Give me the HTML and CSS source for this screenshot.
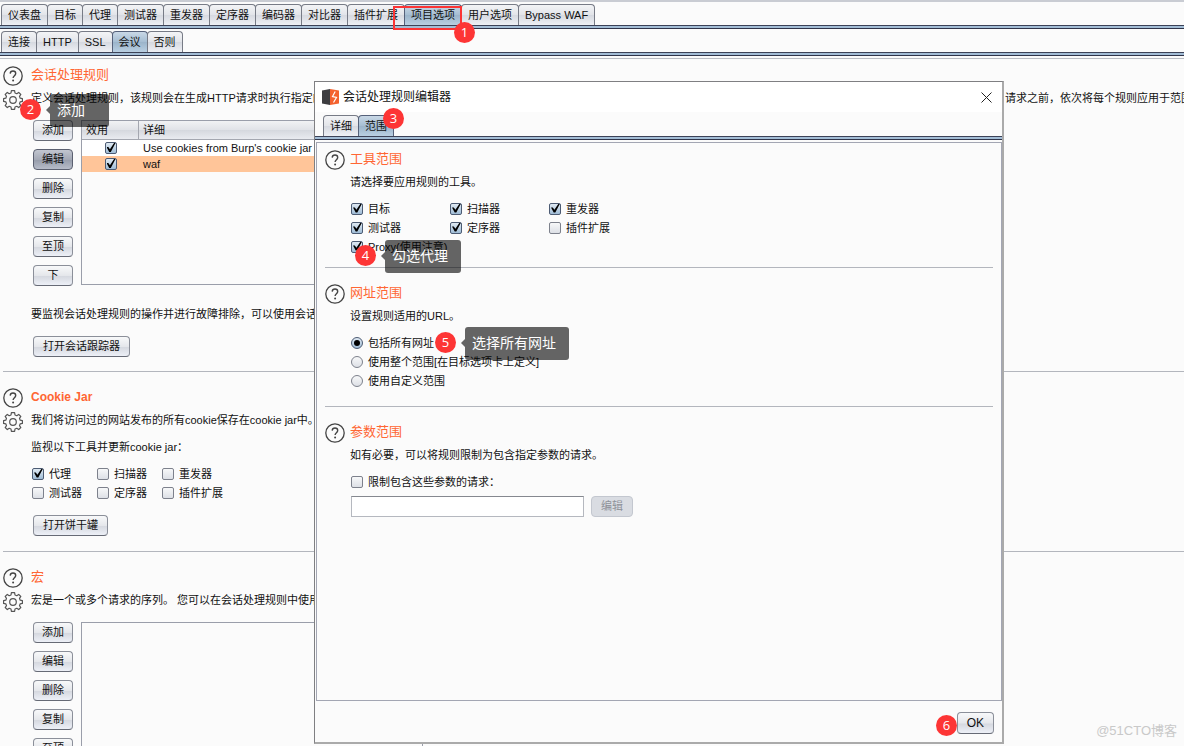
FILE: index.html
```html
<!DOCTYPE html>
<html lang="zh-CN">
<head>
<meta charset="utf-8">
<title>会话处理规则编辑器</title>
<link rel="stylesheet" href="styles.css">
</head>
<body>
<svg class="defs" aria-hidden="true">
  <symbol id="help" viewBox="0 0 20 20">
    <circle cx="10" cy="10" r="9.2" fill="none" stroke="#444" stroke-width="1.3"/>
    <path d="M7.2 7.6C7.3 5.9 8.4 5 10 5s2.7 1 2.7 2.4c0 2.3-2.6 2.3-2.6 4.7" fill="none" stroke="#444" stroke-width="1.4"/>
    <circle cx="10.1" cy="14.6" r="1" fill="#444"/>
  </symbol>
  <symbol id="gear" viewBox="0 0 20 20">
    <path d="M8.400 .700h3.200l.400 2.300 1.800.700 1.900-1.300 2.100 2.100-1.300 1.900.700 1.800 2.200.400v2.800l-2.200.400-.700 1.800 1.300 1.900-2.100 2.100-1.900-1.300-1.800.700-.400 2.300H8.400L8 17l-1.800-.700-1.900 1.300-2.100-2.100 1.300-1.900-.700-1.800-2.200-.400V8.600l2.200-.400.700-1.800-1.300-1.900 2.100-2.100 1.900 1.300L8 3z" fill="none" stroke="#555" stroke-width="1.2" stroke-linejoin="round"/>
    <circle cx="10" cy="10" r="3.300" fill="none" stroke="#555" stroke-width="1.2"/>
  </symbol>
</svg>

<main class="app">
  <nav class="tabs">
    <button class="tab">仪表盘</button><button class="tab">目标</button><button class="tab">代理</button><button class="tab">测试器</button><button class="tab">重发器</button><button class="tab">定序器</button><button class="tab">编码器</button><button class="tab">对比器</button><button class="tab">插件扩展</button><button class="tab active">项目选项</button><button class="tab">用户选项</button><button class="tab">Bypass WAF</button>
  </nav>
  <nav class="tabs">
    <button class="tab">连接</button><button class="tab">HTTP</button><button class="tab">SSL</button><button class="tab active">会议</button><button class="tab">否则</button>
  </nav>

  <div class="options">
    <section class="section">
      <div class="icons"><svg class="icon"><use href="#help"/></svg><svg class="icon"><use href="#gear"/></svg></div>
      <div class="content">
        <h2>会话处理规则</h2>
        <p class="desc split"><span>定义会话处理规则，该规则会在生成HTTP请求时执行指定的操作</span><span class="tail">请求之前，依次将每个规则应用于范围</span></p>
        <div class="list">
          <div class="actions">
            <button class="btn">添加</button><button class="btn pressed">编辑</button><button class="btn">删除</button><button class="btn">复制</button><button class="btn">至顶</button><button class="btn">下</button>
          </div>
          <div class="frame">
            <table class="rules">
              <thead><tr><th class="enabled">效用</th><th>详细</th></tr></thead>
              <tbody>
                <tr><td class="enabled"><input type="checkbox" class="check" aria-label="Use cookies from Burp's cookie jar" checked></td><td>Use cookies from Burp's cookie jar</td></tr>
                <tr class="selected"><td class="enabled"><input type="checkbox" class="check" aria-label="waf" checked></td><td>waf</td></tr>
              </tbody>
            </table>
          </div>
        </div>
        <p class="note">要监视会话处理规则的操作并进行故障排除，可以使用会话跟踪器</p>
        <button class="btn wide tracer">打开会话跟踪器</button>
      </div>
    </section>

    <section class="section">
      <div class="icons"><svg class="icon"><use href="#help"/></svg><svg class="icon"><use href="#gear"/></svg></div>
      <div class="content">
        <h2 class="strong">Cookie Jar</h2>
        <p class="desc">我们将访问过的网站发布的所有cookie保存在cookie jar中。会话</p>
        <p class="monitor">监视以下工具并更新cookie jar：</p>
        <div class="choices jar">
          <label><input type="checkbox" class="check" checked>代理</label><label><input type="checkbox" class="check">扫描器</label><label><input type="checkbox" class="check">重发器</label>
          <label><input type="checkbox" class="check">测试器</label><label><input type="checkbox" class="check">定序器</label><label><input type="checkbox" class="check">插件扩展</label>
        </div>
        <button class="btn wide open-jar">打开饼干罐</button>
      </div>
    </section>

    <section class="section">
      <div class="icons"><svg class="icon"><use href="#help"/></svg><svg class="icon"><use href="#gear"/></svg></div>
      <div class="content">
        <h2>宏</h2>
        <p class="desc">宏是一个或多个请求的序列。 您可以在会话处理规则中使用宏</p>
        <div class="list">
          <div class="actions">
            <button class="btn">添加</button><button class="btn">编辑</button><button class="btn">删除</button><button class="btn">复制</button><button class="btn">至顶</button>
          </div>
          <div class="frame"></div>
        </div>
      </div>
    </section>
  </div>

  <div class="watermark">@51CTO博客</div>

  <div class="dialog" role="dialog" aria-labelledby="dialog-title">
    <header class="titlebar">
      <svg class="logo" viewBox="0 0 17 16"><path d="M0 1.500 8 0v16l-8-1.500z" fill="#3d3d40"/><path d="M8 0l9 1.500v13L8 16z" fill="#f4622f"/><path d="M13.200 2.500 10.500 7.500l4 1-3 5" fill="none" stroke="#fff" stroke-width="1.200"/></svg>
      <h1 id="dialog-title">会话处理规则编辑器</h1>
      <button class="close" aria-label="关闭"><svg viewBox="0 0 11 11"><path d="M.5.5l10 10M10.500.5l-10 10" stroke="#222" fill="none"/></svg></button>
    </header>
    <nav class="tabs dialog-tabs">
      <button class="tab">详细</button><button class="tab active">范围</button>
    </nav>
    <div class="panel">
      <section class="section">
        <svg class="icon"><use href="#help"/></svg>
        <div class="content">
          <h2>工具范围</h2>
          <p class="desc">请选择要应用规则的工具。</p>
          <div class="choices tools">
            <label><input type="checkbox" class="check" checked>目标</label><label><input type="checkbox" class="check" checked>扫描器</label><label><input type="checkbox" class="check" checked>重发器</label>
            <label><input type="checkbox" class="check" checked>测试器</label><label><input type="checkbox" class="check" checked>定序器</label><label><input type="checkbox" class="check">插件扩展</label>
            <label><input type="checkbox" class="check" checked>Proxy(使用注意)</label>
          </div>
        </div>
      </section>
      <section class="section">
        <svg class="icon"><use href="#help"/></svg>
        <div class="content">
          <h2>网址范围</h2>
          <p class="desc">设置规则适用的URL。</p>
          <div class="choices">
            <label><input type="radio" name="scope" class="radio" checked>包括所有网址</label>
            <label><input type="radio" name="scope" class="radio">使用整个范围[在目标选项卡上定义]</label>
            <label><input type="radio" name="scope" class="radio">使用自定义范围</label>
          </div>
        </div>
      </section>
      <section class="section">
        <svg class="icon"><use href="#help"/></svg>
        <div class="content">
          <h2>参数范围</h2>
          <p class="desc">如有必要，可以将规则限制为包含指定参数的请求。</p>
          <div class="choices"><label><input type="checkbox" class="check">限制包含这些参数的请求：</label></div>
          <div class="params"><input type="text" class="field" aria-label="参数"><button class="btn" disabled>编辑</button></div>
        </div>
      </section>
    </div>
    <footer class="footer"><button class="btn ok">OK</button></footer>
  </div>

  <div class="highlight"></div>
  <span class="badge b1">1</span>
  <span class="badge b2">2</span><span class="tip t2">添加</span>
  <span class="badge b3">3</span>
  <span class="badge b4">4</span><span class="tip t4">勾选代理</span>
  <span class="badge b5">5</span><span class="tip t5">选择所有网址</span>
  <span class="badge b6">6</span>
</main>
</body>
</html>
```
FILE: styles.css
```css
* { box-sizing: border-box; }
body {
  margin: 0;
  background: #fbfbfb;
  color: #111;
  font: 11px/16px "Liberation Sans", "Noto Sans CJK SC", sans-serif;
}
h1, h2, p { margin: 0; font-weight: normal; }
button, input { font: inherit; color: inherit; margin: 0; }
.defs { display: none; }
.app { position: relative; height: 100vh; overflow: hidden; border-top: 2px solid #c9ccd3; }

/* Tabs */
.tabs {
  display: flex;
  padding: 2px 0 4px 1px;
  white-space: nowrap;
  background: linear-gradient(#3c4257 0 1px, #a3bdd6 1px 3px, #30354a 3px 4px) bottom / 100% 4px no-repeat;
}
.tab {
  height: 21px;
  padding: 0 6px;
  margin-right: -1px;
  border: 1px solid #777b86;
  border-bottom: 0;
  border-radius: 4px 4px 0 0;
  background: linear-gradient(#f3f4f6, #e2e4e9 50%, #d6d9e0 51%, #eef0f5);
  line-height: 20px;
}
.tab.active { background: linear-gradient(#c9d8e6, #a5bdd2 50%, #9bb4ca 51%, #b9cfe2); border-color: #55617a; }

/* Option sections */
.options { border-top: 1px solid #b9bcc3; margin-top: 2px; padding-left: 3px; }
.section { display: grid; grid-template-columns: 20px minmax(0, 1fr); column-gap: 8px; padding: 16px 0 15px; border-bottom: 1px solid #b3b6bd; }
.options .section:first-child { padding: 7px 0 14px; }
.section:last-child { border-bottom: 0; }
.icons { display: flex; flex-direction: column; gap: 4px; }
.icon { display: block; width: 20px; height: 20px; }
h2 { color: #ff6633; font-size: 13px; line-height: 18px; }
h2.strong { font-size: 12px; font-weight: bold; }
.desc { margin-top: 6px; white-space: nowrap; overflow: hidden; }
.split { display: flex; justify-content: space-between; }
.tail { margin-right: -8px; }
.list { display: flex; gap: 8px; margin-top: 14px; }
.actions { display: flex; flex-direction: column; gap: 8px; width: 42px; padding-left: 2px; }
.btn {
  height: 21px;
  padding: 0 9px;
  border: 1px solid #8b8f99;
  border-bottom-color: #666a75;
  border-radius: 4px;
  background: linear-gradient(#f8f9fa, #e5e7eb 50%, #d6d9e0 55%, #edf0f7);
  line-height: 19px;
  white-space: nowrap;
}
.actions .btn { padding: 0; }
.btn.pressed { background: linear-gradient(#c2c6d0, #a4a9b6 50%, #989eac 55%, #b7bcc9); border-color: #5b6070; }
.btn:disabled { background: #d9dce2; border-color: #c3c7cf; color: #8e9199; }
.wide { display: block; margin-left: 2px; }
.frame { width: 342px; border: 1px solid #9a9eaa; height: 165px; }
.rules { width: 100%; border-collapse: separate; border-spacing: 0; }
.rules th { height: 19px; padding: 0 4px; text-align: left; font-weight: normal; background: linear-gradient(#f1f2f4, #e0e2e7 50%, #d5d8de 51%, #e9ebf0); border-bottom: 1px solid #a4a7b0; }
.rules th.enabled { width: 57px; border-right: 1px solid #a4a7b0; }
.rules td { height: 16px; padding: 0 4px; line-height: 16px; }
.rules tbody tr { background: #fff; }
.rules tbody tr.selected { background: #ffc599; }
td.enabled .check { display: block; margin: 0 auto; }
.note { margin-top: 20px; white-space: nowrap; }
.tracer { margin-top: 14px; }
.monitor { margin-top: 11px; }
.open-jar { margin-top: 13px; }

/* Choices */
.choices { display: grid; margin-top: 9px; }
.jar { grid-template-columns: repeat(3, 65px); }
.tools { grid-template-columns: repeat(3, 99px); }
.choices label { display: flex; align-items: center; gap: 5px; height: 19px; padding-left: 1px; white-space: nowrap; }
.check, .radio {
  appearance: none;
  flex: none;
  position: relative;
  width: 12px;
  height: 12px;
  border: 1px solid #7d818c;
  border-radius: 2px;
  background: linear-gradient(#f7f8f9, #dde0e6);
}
.radio { border-radius: 50%; }
.check:checked, .radio:checked { background: linear-gradient(#dfe9f2, #9fbcd6); border-color: #4c5b73; }
.check:checked::after {
  content: "";
  position: absolute;
  left: 1px;
  top: 0;
  width: 9px;
  height: 9px;
  background: #000;
  clip-path: polygon(0 45%, 20% 45%, 38% 70%, 84% 0, 100% 0, 48% 100%, 30% 100%);
}
.radio:checked::after { content: ""; position: absolute; inset: 2px; border-radius: 50%; background: #000; }

/* Dialog */
.dialog {
  position: absolute;
  left: 314px;
  right: 180px;
  top: 79px;
  bottom: 2px;
  display: flex;
  flex-direction: column;
  background: #fbfbfb;
  border: 1px solid #7f7f82;
  border-right: 2px solid #aaa;
  border-bottom: 2px solid #aaa;
}
.titlebar { display: flex; align-items: center; gap: 4px; height: 30px; padding: 0 10px 0 7px; background: #fff; }
.logo { width: 17px; height: 16px; }
h1 { font-size: 12px; }
.close { display: flex; margin-left: auto; padding: 0; border: 0; background: none; }
.close svg { width: 11px; height: 11px; }
.dialog-tabs { padding: 3px 0 4px 8px; }
.panel { flex: 1; margin: 2px 0 0 1px; padding: 0 8px; border: 1px solid #a3a6b3; }
.panel .section { column-gap: 5px; padding-bottom: 16px; }
.panel .section:first-child { padding: 7px 0 11px; }
.params { display: flex; gap: 7px; margin-top: 5px; padding-left: 1px; }
.field { width: 233px; height: 21px; padding: 0 4px; border: 1px solid #b5b8bf; border-top-color: #85888f; background: #fff; }
.footer { display: flex; justify-content: flex-end; padding: 11px 8px 8px; }
.ok { height: 22px; font-size: 12px; }

/* Numbered guide marks over the interface */
.highlight { position: absolute; left: 393px; top: 4px; width: 69px; height: 24px; border: 2px solid #fb3434; }
.badge { position: absolute; width: 21px; height: 21px; border-radius: 50%; background: #fd3535; color: #fff; font: 13px/21px "Open Sans", sans-serif; text-align: center; }
.b1 { left: 454px; top: 20px; }
.b2 { left: 20px; top: 97px; }
.b3 { left: 383px; top: 106px; }
.b4 { left: 355px; top: 243px; }
.b5 { left: 435px; top: 330px; }
.b6 { right: 227px; bottom: 10px; }
.tip { position: absolute; height: 33px; padding: 0 13px 0 7px; border-radius: 3px; background: rgba(0, 0, 0, .6); color: #fff; font-size: 14px; line-height: 33px; white-space: nowrap; }
.tip::before { content: ""; position: absolute; left: -4px; top: 12px; border: 4px solid transparent; border-left: 0; border-right-color: rgba(0, 0, 0, .6); }
.t2 { left: 50px; top: 92px; min-width: 59px; }
.t4 { left: 385px; top: 238px; }
.t5 { left: 465px; top: 325px; }
.watermark { position: absolute; right: 7px; bottom: 7px; color: #c9c9c9; font-size: 13px; }
```
